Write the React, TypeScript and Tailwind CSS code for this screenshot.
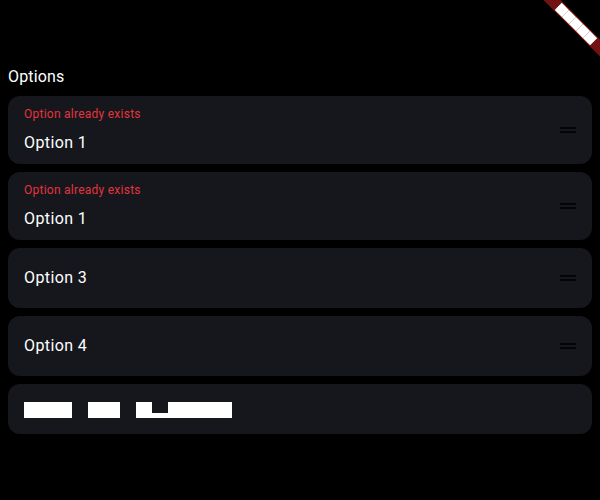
import React from 'react';

const font = { fontFamily: 'Roboto, "Noto Sans", sans-serif' };

function DragHandle() {
  return (
    <div className="flex h-6 w-4 shrink-0 flex-col items-center justify-center gap-[2px]">
      <div className="h-[2px] w-4 bg-[#050507]" />
      <div className="h-[2px] w-4 bg-[#050507]" />
    </div>
  );
}

function OptionCard(props: { label: string; error?: string }) {
  if (props.error) {
    return (
      <div className="flex items-center rounded-xl bg-[#16171c] pl-4 pr-4">
        <div className="flex-1 pt-[10px] pb-[7px]">
          <div className="text-[12px] leading-4 tracking-[0.25px] text-[#e5343d]">{props.error}</div>
          <div className="mt-[7px] text-[16px] leading-7 tracking-[0.4px] text-white">
            {props.label}
          </div>
        </div>
        <DragHandle />
      </div>
    );
  }
  return (
    <div className="flex items-center rounded-xl bg-[#16171c] pl-4 pr-4">
      <div className="flex-1 pt-4 pb-4 text-[16px] leading-7 tracking-[0.4px] text-white">
        {props.label}
      </div>
      <DragHandle />
    </div>
  );
}

// rendered with a block test font in the reference: each glyph is a white square
function BlockWord(props: { word: string }) {
  return (
    <span className="flex">
      {props.word.split('').map((ch, i) =>
        ch === 'p' ? (
          <span
            key={i}
            className="flex h-4 w-4 flex-col text-[10px] leading-4 text-transparent"
          >
            <span className="h-[11px]" />
            <span className="h-[5px] bg-white" />
          </span>
        ) : (
          <span key={i} className="block h-4 w-4 overflow-hidden bg-white text-center text-[10px] leading-4 text-white">
            {ch}
          </span>
        )
      )}
    </span>
  );
}

function DebugBanner() {
  return (
    <div className="pointer-events-none absolute right-0 top-0 h-[80px] w-[80px] overflow-hidden">
      <div className="absolute left-[40px] top-[28px] flex h-[12px] w-[80px] origin-[40px_-28px] rotate-45 items-center justify-center bg-[#731212]">
        {'DEBUG'.split('').map((ch, i) => (
          <span
            key={i}
            className="block h-[10.2px] w-[10.2px] overflow-hidden bg-white text-[7px] leading-[10px] text-white"
          >
            {ch}
          </span>
        ))}
      </div>
    </div>
  );
}

export default function App() {
  return (
    <div className="relative h-[500px] w-[600px] overflow-hidden bg-black" style={font}>
      <div className="flex flex-col px-2 pt-[65px]">
        <div className="text-[16px] leading-6 tracking-[0.15px] text-white">Options</div>
        <div className="mt-[7px] flex flex-col gap-2">
          <OptionCard label="Option 1" error="Option already exists" />
          <OptionCard label="Option 1" error="Option already exists" />
          <OptionCard label="Option 3" />
          <OptionCard label="Option 4" />
          <div className="flex gap-4 rounded-xl bg-[#16171c] px-4 pt-[18px] pb-4">
            <BlockWord word="Add" />
            <BlockWord word="an" />
            <BlockWord word="option" />
          </div>
        </div>
      </div>
      <DebugBanner />
    </div>
  );
}
